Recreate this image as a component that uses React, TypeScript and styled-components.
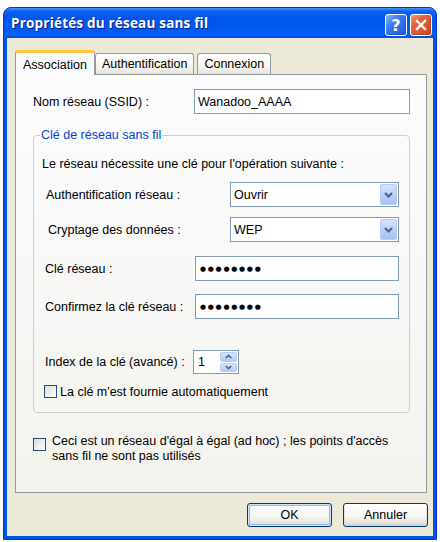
import React, {FC, ReactNode} from "react"
import styled, {createGlobalStyle} from "styled-components"

const GlobalStyle = createGlobalStyle`
  body {
    margin: 0;
    background: #ffffff;
    font-family: "Liberation Sans", Arial, sans-serif;
    font-size: 12.5px;
    color: #000000;
  }
`;

const Window = styled.div`
  margin: 7px 0 0 3px;
  width: 434px;
  height: 533px;
  box-sizing: border-box;
  border: 1px solid #0831D9;
  border-radius: 8px 8px 0 0;
  background: #0055E5;
  display: flex;
  flex-direction: column;
  overflow: hidden;
`;

const TitleBar = styled.div`
  height: 30px;
  flex: none;
  display: flex;
  align-items: center;
  justify-content: space-between;
  padding: 0 4px 0 7px;
  background: linear-gradient(to bottom, #4A96FA 0px, #0D62F2 3px, #0056EA 10px, #0058EE 20px, #0063F7 26px, #004EDF 30px);
`;

const Title = styled.span`
  font-family: "Open Sans", "DejaVu Sans", sans-serif;
  font-weight: 700;
  font-size: 13.5px;
  color: #ffffff;
  text-shadow: 1px 1px 0 #0A1E8C;
  letter-spacing: 0.2px;
`;

const CaptionButtons = styled.div`
  display: flex;
  gap: 3px;
  margin-top: 4px;
`;

const CaptionButton = styled.div<{ $close?: boolean }>`
  width: 22px;
  height: 22px;
  box-sizing: border-box;
  border: 1px solid #ffffff;
  border-radius: 3px;
  display: flex;
  align-items: center;
  justify-content: center;
  color: #ffffff;
  font-family: "DejaVu Sans", sans-serif;
  font-weight: 700;
  font-size: 16px;
  background: ${p => p.$close
    ? "linear-gradient(135deg, #F09A7C 0%, #E2603C 35%, #D2441F 100%)"
    : "linear-gradient(135deg, #8AB2FB 0%, #3A78F0 40%, #1F5EE0 100%)"};
  box-shadow: inset -1px -1px 1px rgba(0, 0, 0, 0.2);
`;

const Client = styled.div`
  flex: 1;
  margin: 0 3px 3px 3px;
  background: #ECE9D8;
  display: flex;
  flex-direction: column;
  padding: 12px 6px 0 8px;
`;

const TabStrip = styled.div`
  display: flex;
  align-items: flex-end;
  height: 24px;
`;

const Tab = styled.div<{ $active?: boolean }>`
  box-sizing: border-box;
  height: ${p => p.$active ? "25px" : "21px"};
  margin-bottom: ${p => p.$active ? "-1px" : "0"};
  margin-right: ${p => p.$active ? "0" : "3px"};
  position: relative;
  z-index: ${p => p.$active ? 1 : 0};
  padding: ${p => p.$active ? "2px 7px 0 7px" : "0 6px"};
  display: flex;
  align-items: center;
  border: 1px solid #919B9C;
  border-bottom: none;
  border-top: ${p => p.$active ? "3px solid #FFC83C" : "1px solid #919B9C"};
  border-radius: 3px 3px 0 0;
  background: ${p => p.$active ? "#FCFCFE" : "linear-gradient(#FFFFFF, #F3F2EC 70%, #E6E4DA)"};
  white-space: nowrap;
`;

const Panel = styled.div`
  height: 419px;
  flex: none;
  box-sizing: border-box;
  border: 1px solid #919B9C;
  background: linear-gradient(#FCFCFE, #F4F3EE);
  padding: 14px 16px 0 17px;
  display: flex;
  flex-direction: column;
`;

const Row = styled.div<{ $mt?: number; $h?: number }>`
  display: flex;
  align-items: center;
  height: ${p => p.$h ?? 25}px;
  margin-top: ${p => p.$mt ?? 0}px;
`;

const Label = styled.span<{ $indent?: number; $w?: number }>`
  margin-left: ${p => p.$indent ?? 1}px;
  white-space: nowrap;
  ${p => p.$w ? `width: ${p.$w}px; flex: none;` : ""}
`;

const TextBox = styled.div<{ $w: number }>`
  width: ${p => p.$w}px;
  height: 100%;
  box-sizing: border-box;
  margin-left: auto;
  border: 1px solid #7F9DB9;
  background: #ffffff;
  display: flex;
  align-items: center;
  padding-left: 3px;
  position: relative;
`;

const Dots = styled.span`
  font-family: "DejaVu Sans", sans-serif;
  font-size: 7px;
  letter-spacing: 1.7px;
  padding-left: 1px;
`;

const ComboArrow = styled.div`
  position: absolute;
  right: 1px;
  top: 1px;
  bottom: 1px;
  width: 17px;
  box-sizing: border-box;
  border: 1px solid #B7CCF6;
  border-radius: 2px;
  background: linear-gradient(#D6E3FD, #B6CDF8 60%, #A8C2F4);
  display: flex;
  align-items: center;
  justify-content: center;
`;

const Group = styled.fieldset`
  margin: 14px 0 0 0;
  padding: 0 10px 13px 10px;
  border: 1px solid #D0D0BF;
  border-radius: 4px;
  min-width: 0;
  display: flex;
  flex-direction: column;
`;

const Legend = styled.legend`
  color: #0046D5;
  padding: 0 1px;
  margin-left: -4px;
  line-height: 14px;
`;

const Para = styled.div<{ $mt?: number }>`
  line-height: 14px;
  margin-top: ${p => p.$mt ?? 0}px;
  margin-left: -2px;
  white-space: nowrap;
`;

const Spinner = styled.div`
  width: 46px;
  height: 100%;
  box-sizing: border-box;
  border: 1px solid #7F9DB9;
  background: #ffffff;
  display: flex;
  align-items: stretch;
  padding-left: 4px;
`;

const SpinValue = styled.span`
  flex: 1;
  display: flex;
  align-items: center;
`;

const SpinButtons = styled.div`
  width: 17px;
  display: flex;
  flex-direction: column;
  gap: 1px;
  padding: 1px 1px 1px 0;
`;

const SpinButton = styled.div`
  flex: 1;
  border: 1px solid #B7CCF6;
  border-radius: 2px;
  background: linear-gradient(#D6E3FD, #B4CBF7);
  display: flex;
  align-items: center;
  justify-content: center;
`;

const CheckRow = styled.div<{ $mt?: number; $gap: number; $lh: number }>`
  display: flex;
  align-items: flex-start;
  gap: ${p => p.$gap}px;
  margin-top: ${p => p.$mt ?? 0}px;
  line-height: ${p => p.$lh}px;
`;

const CheckBox = styled.div<{ $mt?: number }>`
  width: 13px;
  height: 13px;
  flex: none;
  box-sizing: border-box;
  border: 1px solid #1C5180;
  background: linear-gradient(135deg, #DCDCD7, #FFFFFF);
  margin-top: ${p => p.$mt ?? 0}px;
`;

const ButtonRow = styled.div`
  display: flex;
  justify-content: flex-end;
  gap: 11px;
  margin: 10px -1px 0 0;
`;

const Button = styled.div<{ $default?: boolean }>`
  width: 85px;
  height: 24px;
  box-sizing: border-box;
  border: 1px solid #003C74;
  border-radius: 3px;
  background: linear-gradient(#FFFFFF, #F4F4F0 60%, #E3E1D8 90%, #D6D0C5);
  display: flex;
  align-items: center;
  justify-content: center;
  box-shadow: ${p => p.$default
    ? "inset 0 0 0 1px #CEE7FF, inset 0 0 0 2px #98B8EA"
    : "inset 0 -1px 0 1px rgba(214, 208, 197, 0.5)"};
`;

const Chevron: FC<{ up?: boolean; size?: number }> = ({up, size = 9}) => (
  <svg width={size} height={Math.round(size * 0.7)} viewBox="0 0 9 6">
    <path d={up ? "M1 5 L4.5 1.5 L8 5" : "M1 1 L4.5 4.5 L8 1"} fill="none" stroke="#4D6185" strokeWidth="2" />
  </svg>
);

const Combo: FC<{ value: string }> = ({value}) => (
  <TextBox $w={169}>
    {value}
    <ComboArrow><Chevron /></ComboArrow>
  </TextBox>
);

const FieldRow: FC<{ label: string; indent?: number; mt?: number; children: ReactNode }> = ({label, indent, mt, children}) => (
  <Row $mt={mt}>
    <Label $indent={indent}>{label}</Label>
    {children}
  </Row>
);

const App: FC = () => (
  <>
    <GlobalStyle />
    <Window>
      <TitleBar>
        <Title>Propriétés du réseau sans fil</Title>
        <CaptionButtons>
          <CaptionButton>?</CaptionButton>
          <CaptionButton $close>
            <svg width="12" height="12" viewBox="0 0 12 12">
              <path d="M2 2 L10 10 M10 2 L2 10" stroke="#ffffff" strokeWidth="2.4" strokeLinecap="square" />
            </svg>
          </CaptionButton>
        </CaptionButtons>
      </TitleBar>
      <Client>
        <TabStrip>
          <Tab $active>Association</Tab>
          <Tab>Authentification</Tab>
          <Tab>Connexion</Tab>
        </TabStrip>
        <Panel>
          <FieldRow label="Nom réseau (SSID) :" indent={0}>
            <TextBox $w={216}>Wanadoo_AAAA</TextBox>
          </FieldRow>
          <Group>
            <Legend>Clé de réseau sans fil</Legend>
            <Para $mt={15}>Le réseau nécessite une clé pour l'opération suivante :</Para>
            <FieldRow label="Authentification réseau :" indent={2} mt={11}>
              <Combo value="Ouvrir" />
            </FieldRow>
            <FieldRow label="Cryptage des données :" indent={4} mt={10}>
              <Combo value="WEP" />
            </FieldRow>
            <FieldRow label="Clé réseau :" mt={14}>
              <TextBox $w={204}><Dots>●●●●●●●●</Dots></TextBox>
            </FieldRow>
            <FieldRow label="Confirmez la clé réseau :" mt={13}>
              <TextBox $w={204}><Dots>●●●●●●●●</Dots></TextBox>
            </FieldRow>
            <Row $mt={31} $h={24}>
              <Label $w={148}>Index de la clé (avancé) :</Label>
              <Spinner>
                <SpinValue>1</SpinValue>
                <SpinButtons>
                  <SpinButton><Chevron up size={7} /></SpinButton>
                  <SpinButton><Chevron size={7} /></SpinButton>
                </SpinButtons>
              </Spinner>
            </Row>
            <CheckRow $mt={11} $gap={3} $lh={14}>
              <CheckBox $mt={0} />
              <span>La clé m'est fournie automatiquement</span>
            </CheckRow>
          </Group>
          <CheckRow $mt={21} $gap={6} $lh={15}>
            <CheckBox $mt={4} />
            <span>
              Ceci est un réseau d'égal à égal (ad hoc) ; les points d'accès<br />
              sans fil ne sont pas utilisés
            </span>
          </CheckRow>
        </Panel>
        <ButtonRow>
          <Button $default>OK</Button>
          <Button>Annuler</Button>
        </ButtonRow>
      </Client>
    </Window>
  </>
);

export default App
